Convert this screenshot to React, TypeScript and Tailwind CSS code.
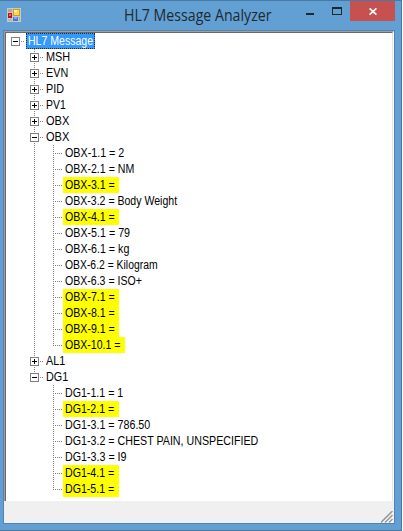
import { useLayoutEffect, useRef, useState } from 'react';

type FitProps = { text: string; width: number; className?: string };

// Condenses a line of text horizontally to the given width.
function FitText({ text, width, className = '' }: FitProps) {
  const ref = useRef<HTMLSpanElement>(null);
  const [scale, setScale] = useState(1);
  useLayoutEffect(() => {
    if (ref.current) setScale(width / ref.current.offsetWidth);
  }, [width, text]);
  return (
    <span className="block shrink-0" style={{ width }}>
      <span ref={ref} className={`inline-block origin-left whitespace-nowrap ${className}`} style={{ transform: `scaleX(${scale})` }}>
        {text}
      </span>
    </span>
  );
}

type Item = { text: string; width: number; mark?: number };
type Segment = { name: string; width: number; items?: Item[] };

const segments: Segment[] = [
  { name: 'MSH', width: 24.5 },
  { name: 'EVN', width: 22.5 },
  { name: 'PID', width: 18 },
  { name: 'PV1', width: 20 },
  { name: 'OBX', width: 23 },
  {
    name: 'OBX',
    width: 23,
    items: [
      { text: 'OBX-1.1 = 2', width: 59 },
      { text: 'OBX-2.1 = NM', width: 69 },
      { text: 'OBX-3.1 =', width: 49.5, mark: 56 },
      { text: 'OBX-3.2 = Body Weight', width: 112.5 },
      { text: 'OBX-4.1 =', width: 49.5, mark: 56 },
      { text: 'OBX-5.1 = 79', width: 65 },
      { text: 'OBX-6.1 = kg', width: 64 },
      { text: 'OBX-6.2 = Kilogram', width: 92.5 },
      { text: 'OBX-6.3 = ISO+', width: 76.5 },
      { text: 'OBX-7.1 =', width: 49.5, mark: 56 },
      { text: 'OBX-8.1 =', width: 49.5, mark: 56 },
      { text: 'OBX-9.1 =', width: 49.5, mark: 56 },
      { text: 'OBX-10.1 =', width: 55.5, mark: 62 },
    ],
  },
  { name: 'AL1', width: 19 },
  {
    name: 'DG1',
    width: 22.5,
    items: [
      { text: 'DG1-1.1 = 1', width: 58.5 },
      { text: 'DG1-2.1 =', width: 49.5, mark: 56 },
      { text: 'DG1-3.1 = 786.50', width: 85.5 },
      { text: 'DG1-3.2 = CHEST PAIN, UNSPECIFIED', width: 193 },
      { text: 'DG1-3.3 = I9', width: 61.5 },
      { text: 'DG1-4.1 =', width: 49.5, mark: 56 },
      { text: 'DG1-5.1 =', width: 49.5, mark: 56 },
    ],
  },
];

function Toggle({ open, trunk }: { open: boolean; trunk: 'none' | 'full' | 'top' }) {
  return (
    <svg className="block h-4 w-[15px] shrink-0" viewBox="0 0 15 16" shapeRendering="crispEdges">
      {trunk !== 'none' && <path d="M4.5 0V4" stroke="#808080" strokeDasharray="1 1" />}
      {trunk === 'full' && <path d="M4.5 12V16" stroke="#808080" strokeDasharray="1 1" />}
      <path d="M10 8.5H14" stroke="#808080" strokeDasharray="1 1" />
      <rect x="0.5" y="4.5" width="8" height="8" fill="#fff" stroke="#808080" />
      <path d={open ? 'M2 8.5H7' : 'M2 8.5H7M4.5 6V11'} stroke="#000" />
    </svg>
  );
}

function LeafRow({ item, trunk, last }: { item: Item; trunk: boolean; last: boolean }) {
  return (
    <div className="flex h-4">
      <svg className="block h-4 w-[33px] shrink-0" viewBox="0 0 33 16" shapeRendering="crispEdges">
        {trunk && <path d="M4.5 0V16" stroke="#808080" strokeDasharray="1 1" />}
        <path d={last ? 'M23.5 0V9' : 'M23.5 0V16'} stroke="#808080" strokeDasharray="1 1" />
        <path d="M23 8.5H32" stroke="#808080" strokeDasharray="1 1" />
      </svg>
      <div className={item.mark ? 'h-4 bg-[#ffff00] pl-[1.5px]' : 'h-4 pl-[1.5px]'} style={item.mark ? { width: item.mark } : undefined}>
        <FitText text={item.text} width={item.width} />
      </div>
    </div>
  );
}

function Tree() {
  return (
    <div className="pl-[5px] font-['Liberation_Sans',Arial,sans-serif] text-[12px] leading-4 text-black">
      <div className="flex h-4">
        <Toggle open trunk="none" />
        <div className="h-4 w-[69px] bg-[#3399ff] text-white outline outline-1 -outline-offset-1 outline-dotted outline-[#42270c]">
          <div className="pl-[1.5px]"><FitText text="HL7 Message" width={65} /></div>
        </div>
      </div>
      <div className="pl-[19px]">
        {segments.map((segment, index) => {
          const last = index === segments.length - 1;
          return (
            <div key={index}>
              <div className="flex h-4">
                <Toggle open={!!segment.items} trunk={last ? 'top' : 'full'} />
                <div className="pl-px"><FitText text={segment.name} width={segment.width} /></div>
              </div>
              {segment.items?.map((item, i) => (
                <LeafRow key={item.text} item={item} trunk={!last} last={i === segment.items!.length - 1} />
              ))}
            </div>
          );
        })}
      </div>
    </div>
  );
}

function FormIcon() {
  return (
    <svg className="block h-[15px] w-[14px]" viewBox="0 0 14 15" shapeRendering="crispEdges">
      <rect width="14" height="14" fill="#c8c8c8" />
      <rect x="1" y="1" width="4" height="3" fill="#aaa8a5" />
      <rect x="1" y="5" width="4" height="5" fill="#b21717" />
      <rect x="2" y="6" width="2" height="2" fill="#ed6658" />
      <rect x="6" y="1" width="7" height="7" fill="#d79b13" />
      <rect x="7" y="2" width="5" height="5" fill="#ffda55" />
      <rect x="7" y="2" width="3" height="2" fill="#fff0a0" />
      <rect x="1" y="11" width="4" height="2" fill="#b5b5b5" />
      <rect x="6" y="9" width="5" height="4" fill="#3d78d8" />
      <rect x="7" y="9" width="3" height="2" fill="#78aaf5" />
      <rect x="12" y="9" width="1" height="4" fill="#aaa" />
    </svg>
  );
}

function TitleBar() {
  return (
    <header className="flex h-[29px] shrink-0 justify-between">
      <div className="flex">
        <div className="w-[124px] pl-[7px] pt-[7px]"><FormIcon /></div>
        <div className="pt-[4px] font-['Open_Sans','Noto_Sans',sans-serif] text-[15.5px] leading-[21px] text-[#202830]">
          <FitText text="HL7 Message Analyzer" width={148} />
        </div>
      </div>
      <div className="flex pr-[6px]">
        <svg className="block h-5 w-[50px]" viewBox="0 0 50 20" shapeRendering="crispEdges">
          <rect x="6" y="12" width="8" height="2" fill="#20272d" />
          <path d="M32 6H42V14H32ZM33 8V13H41V8Z" fill="#20272d" fillRule="evenodd" />
        </svg>
        <div className="flex h-5 w-[45px] justify-center bg-[#c75050]">
          <svg className="mt-[7px] block h-[7px] w-[8px]" viewBox="0 0 8 7">
            <path d="M.6 .4L7.4 6.6M7.4 .4L.6 6.6" stroke="#fff" strokeWidth="1.7" />
          </svg>
        </div>
      </div>
    </header>
  );
}

function SizeGrip() {
  return (
    <svg className="block h-3 w-3" viewBox="0 0 12 12">
      <path d="M1 12L12 1M5 12L12 5M9 12L12 9" stroke="#fff" strokeWidth="2" />
      <path d="M0 11.5L11.5 0M4 11.5L11.5 4M8 11.5L11.5 8" stroke="#9c9c9c" strokeWidth="1.7" />
    </svg>
  );
}

export default function App() {
  return (
    <div className="h-[531px] w-[403px] overflow-hidden bg-white">
      <div className="flex h-[531px] w-[402px] flex-col border-y border-r border-[#4979a5] bg-[#62a0d4]">
        <TitleBar />
        <main className="ml-[3px] flex h-[494px] w-[392px] flex-col border border-[#5085b2] bg-[#f0f0f0]">
          <div className="flex h-[470px] flex-col border-l border-r border-t border-l-[#a0a0a0] border-r-white border-t-[#a0a0a0]">
            <div className="h-[469px] border-l border-r border-t border-l-[#696969] border-r-[#e3e3e3] border-t-[#696969] bg-white">
              <Tree />
            </div>
          </div>
          <footer className="flex flex-1 items-end justify-end pr-px"><SizeGrip /></footer>
        </main>
      </div>
    </div>
  );
}
